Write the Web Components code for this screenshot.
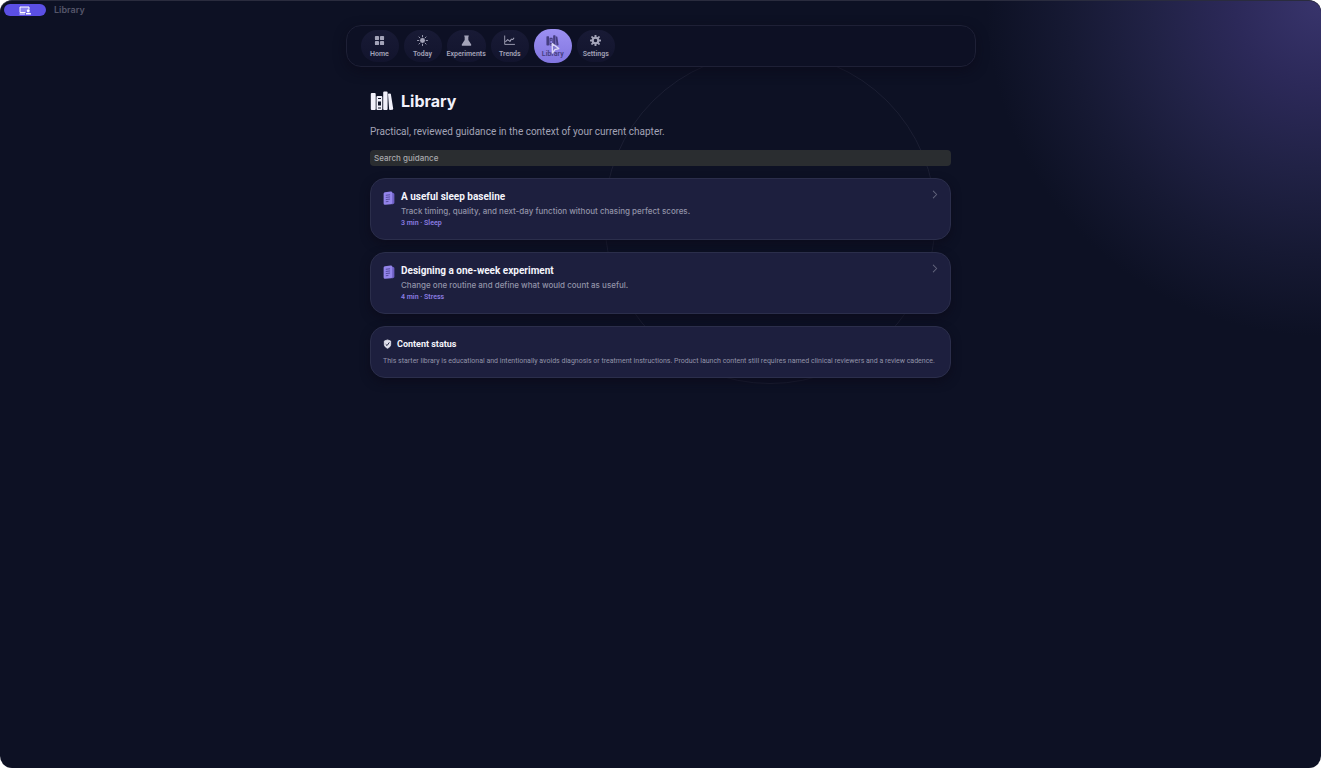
<!DOCTYPE html>
<html lang="en">
<head>
<meta charset="utf-8">
<meta name="viewport" content="width=device-width, initial-scale=1">
<title>Library</title>
<style>
  body {
    margin: 0;
    background: #fff;
    --text: Roboto, "Liberation Sans", sans-serif;
    --display: Inter, "Liberation Sans", sans-serif;
    font-family: var(--text);
  }
</style>
</head>
<body>
<library-app></library-app>

<script>
(() => {
  "use strict";

  const icons = {
    home: `
      <svg viewBox="0 0 24 24" aria-hidden="true">
        <g fill="currentColor">
          <rect x="2" y="2" width="9" height="9" rx="2"/>
          <rect x="13" y="2" width="9" height="9" rx="2"/>
          <rect x="2" y="13" width="9" height="9" rx="2"/>
          <rect x="13" y="13" width="9" height="9" rx="2"/>
        </g>
      </svg>`,
    today: `
      <svg viewBox="0 0 24 24" aria-hidden="true">
        <circle cx="12" cy="12" r="5.4" fill="currentColor"/>
        <path d="M12 1v3M12 20v3M1 12h3M20 12h3M4.2 4.2l2.1 2.1M17.7 17.7l2.1 2.1M4.2 19.8l2.1-2.1M17.7 6.3l2.1-2.1" stroke="currentColor" stroke-width="2" stroke-linecap="round"/>
      </svg>`,
    experiments: `
      <svg viewBox="0 0 24 24" aria-hidden="true">
        <path d="M7 1h10v2.500h-1V11l6 9c1 2 0 3.500-2 3.500H4c-2 0-3-1.500-2-3.500l6-9V3.500H7z" fill="currentColor"/>
      </svg>`,
    trends: `
      <svg viewBox="0 0 24 24" aria-hidden="true">
        <path d="M1.500 2v18.500H23" fill="none" stroke="currentColor" stroke-width="2" stroke-linecap="round"/>
        <path d="M3 15l5-5 5 4 3-5 3 1 3-4" fill="none" stroke="currentColor" stroke-width="2.200" stroke-linejoin="round"/>
      </svg>`,
    library: `
      <svg viewBox="0 0 24 20" aria-hidden="true">
        <path fill="currentColor" fill-rule="evenodd" d="M1.800 2H4.700Q5.700 2 5.700 3V18Q5.700 19 4.700 19H1.800Q.8 19 .8 18V3Q.8 2 1.800 2z
          M7.500 5H11.300Q12.300 5 12.300 6V18Q12.300 19 11.300 19H7.500Q6.500 19 6.500 18V6Q6.500 5 7.500 5zM8 7v1h3V7zM8 10.500v4h3v-4zM8 16.500v1h3v-1z
          M14.200.5H16.600Q17.600.5 17.600 1.500V18Q17.600 19 16.600 19H14.200Q13.200 19 13.200 18V1.500Q13.200.5 14.200.5z"/>
        <path fill="currentColor" d="M18 2.700l2-.2q.8 0 .9.700l2.300 14.600q0 .9-.8 1l-2.400.2q-.8 0-.9-.8z"/>
      </svg>`,
    settings: `
      <svg viewBox="0 0 24 24" aria-hidden="true">
        <path d="M12 1.500v4M12 18.500v4M1.500 12h4M18.500 12h4M4.600 4.600l2.800 2.800M16.600 16.600l2.800 2.800M19.400 4.600l-2.800 2.800M7.400 16.600l-2.800 2.800" stroke="currentColor" stroke-width="4.400" stroke-linecap="round"/>
        <circle cx="12" cy="12" r="6.200" fill="none" stroke="currentColor" stroke-width="4.400"/>
      </svg>`,
    article: `
      <svg viewBox="0 0 22 26" aria-hidden="true">
        <path d="M16 3l3 .6q2 .4 2 2.400V22q0 2-2 2.300l-3 .7z" fill="#6e5fc4"/>
        <path d="M3.500 2.500L14 1q3-.3 3 2.500v19q0 2-2 2.200L4 25.500q-3 .2-3-2.500V5q0-2 2.500-2.500z" fill="#9384ea"/>
        <path d="M5 8l8-1M5 12l8-1M5 16l8-1M5 20l5-.6" stroke="#4c4290" stroke-width="1.600"/>
      </svg>`,
    shield: `
      <svg viewBox="0 0 20 22" aria-hidden="true">
        <path d="M10 2l7 2.500v7.500c0 4-3 6.500-7 8.500-4-2-7-4.500-7-8.500V4.500z" fill="#e0e0ec" stroke="#e0e0ec" stroke-width="2" stroke-linejoin="round"/>
        <path d="M6 11.500l3 3L14 7.500" fill="none" stroke="#1d1f3e" stroke-width="2.200"/>
      </svg>`,
    chevron: `
      <svg viewBox="0 0 10 16" aria-hidden="true">
        <path d="M2 2l6 6-6 6" fill="none" stroke="currentColor" stroke-width="1.800" stroke-linecap="round" stroke-linejoin="round"/>
      </svg>`,
    presenter: `
      <svg viewBox="0 0 24 18" aria-hidden="true">
        <path d="M13 13H2V2h18v5" fill="#8d84f0" stroke="#fff" stroke-width="2"/>
        <circle cx="18.500" cy="9.500" r="3" fill="#fff"/>
        <path d="M13.500 17v-1q0-2.500 3-2.500h4.500q3 0 3 2.500v1z" fill="#fff"/>
        <path d="M1 16h11" stroke="#fff" stroke-width="2"/>
      </svg>`,
    pointer: `
      <svg viewBox="0 0 20 24" aria-hidden="true">
        <path d="M4 3l12 9-7 2-4.500 6z" fill="#8279cd" stroke="#dcd8f6" stroke-width="2.400" stroke-linejoin="round"/>
      </svg>`,
  };

  class TitleBar extends HTMLElement {
    connectedCallback() {
      this.attachShadow({ mode: "open" }).innerHTML = `
        <style>
          :host {
            display: flex;
            align-items: center;
            gap: 8px;
            height: 18px;
            padding: 0 4px;
            color: #55566a;
            font-family: var(--display);
            font-size: 9px;
            line-height: 12px;
            font-weight: 600;
          }

          button {
            display: grid;
            place-items: center;
            width: 42px;
            height: 12px;
            padding: 0;
            border: 0;
            border-radius: 6px;
            background: #5b4fe4;
          }

          svg { display: block; width: 12px; height: 9px; }
        </style>
        <button type="button" aria-label="Presenter">${icons.presenter}</button>
        <slot></slot>`;
    }
  }

  class NavItem extends HTMLElement {
    connectedCallback() {
      const active = this.hasAttribute("active");
      this.attachShadow({ mode: "open" }).innerHTML = `
        <style>
          :host { display: block; position: relative; }

          a {
            box-sizing: border-box;
            display: flex;
            flex-direction: column;
            align-items: center;
            justify-content: center;
            gap: 4px;
            min-width: 38px;
            height: 32px;
            border-radius: 17px;
            background: linear-gradient(#181a35, #12142d);
            color: #a3a3b8;
            font-size: 7px;
            line-height: 8px;
            font-weight: 600;
            text-decoration: none;
          }

          a.active {
            height: 34px;
            background: linear-gradient(#9c90f2, #8276e0);
            color: #453d80;
          }

          .icon svg { display: block; width: 11px; height: 11px; }
          .active .icon svg { width: 13px; }

          .pointer {
            position: absolute;
            top: 13px;
            left: 16px;
            width: 11px;
            height: 13px;
          }
          .pointer svg { display: block; }
        </style>
        <a href="#${this.getAttribute("icon")}" ${active ? 'class="active" aria-current="page"' : ""}>
          <span class="icon">${icons[this.getAttribute("icon")]}</span>
          <slot></slot>
        </a>
        ${active ? `<span class="pointer">${icons.pointer}</span>` : ""}`;
    }
  }

  class NavBar extends HTMLElement {
    connectedCallback() {
      this.attachShadow({ mode: "open" }).innerHTML = `
        <style>
          :host { display: block; }

          nav {
            display: flex;
            align-items: center;
            gap: 5px;
            padding: 3px 14px;
            border: 1px solid #1e2036;
            border-radius: 15px;
            background: #0d1024;
            box-shadow: 0 4px 12px rgba(12, 10, 26, .7);
          }
        </style>
        <nav aria-label="Main"><slot></slot></nav>`;
    }
  }

  class SearchField extends HTMLElement {
    connectedCallback() {
      const label = this.getAttribute("label");
      this.attachShadow({ mode: "open" }).innerHTML = `
        <style>
          :host { display: block; }

          input {
            box-sizing: border-box;
            display: block;
            width: 100%;
            height: 16px;
            padding: 0 4px;
            border: 0;
            border-radius: 4px;
            background: #2a2d30;
            color: #e8e8f2;
            font: 500 8px/12px var(--display);
          }

          input::placeholder { color: #a8a9ad; opacity: 1; }
        </style>
        <input type="search" aria-label="${label}" placeholder="${label}">`;
    }
  }

  // shared surface of the article cards and the status card
  const cardStyles = `
    :host { display: block; }

    .card {
      box-sizing: border-box;
      display: flex;
      padding: 12px;
      border: 1px solid #2b2e4b;
      border-radius: 15px;
      background: #1d1f3e;
      box-shadow: 0 4px 10px rgba(12, 10, 26, .7);
      color: #9293a8;
      text-decoration: none;
    }

    h2 {
      margin: 0;
      color: #f4f4fb;
      font-weight: 700;
    }

    p { margin: 0; }
    svg { display: block; }
  `;

  class ArticleCard extends HTMLElement {
    connectedCallback() {
      this.attachShadow({ mode: "open" }).innerHTML = `
        <style>
          ${cardStyles}

          .card { gap: 6px; padding: 11px 12px; }
          .body { flex: 1; }
          h2 { font-size: 10px; line-height: 14px; }
          p { font: 500 8px/14px var(--display); }

          .meta {
            color: #8b7de2;
            font: 600 7px/10px var(--text);
          }

          .icon { padding-top: 1px; }
          .icon svg { width: 12px; height: 14px; }
          .chevron { color: #62647c; }
          .chevron svg { width: 6px; height: 9px; }
        </style>
        <a class="card" href="#article">
          <span class="icon">${icons.article}</span>
          <div class="body">
            <h2><slot name="title"></slot></h2>
            <p><slot></slot></p>
            <p class="meta"><slot name="meta"></slot></p>
          </div>
          <span class="chevron">${icons.chevron}</span>
        </a>`;
    }
  }

  class StatusCard extends HTMLElement {
    connectedCallback() {
      this.attachShadow({ mode: "open" }).innerHTML = `
        <style>
          ${cardStyles}

          .card {
            flex-direction: column;
            gap: 8px;
            font-size: 7px;
            line-height: 8px;
          }

          header { display: flex; align-items: center; gap: 5px; }
          header svg { width: 9px; height: 10px; }
          h2 { font-size: 9px; line-height: 10px; }
        </style>
        <section class="card">
          <header>${icons.shield}<h2><slot name="title"></slot></h2></header>
          <p><slot></slot></p>
        </section>`;
    }
  }

  class LibraryApp extends HTMLElement {
    connectedCallback() {
      this.attachShadow({ mode: "open" }).innerHTML = `
        <style>
          :host {
            box-sizing: border-box;
            display: block;
            position: relative;
            overflow: hidden;
            min-height: 100vh;
            border-top: 1px solid #2a2c3e;
            border-radius: 12px;
            background:
              radial-gradient(circle 335px at 100% 0, #38346c, #2c2959 26%, #212246 50%, #161933 76%, rgba(13, 17, 36, 0)),
              #0d1124;
          }

          .ring {
            position: absolute;
            top: 51px;
            left: calc(50% - 57px);
            box-sizing: border-box;
            width: 332px;
            height: 332px;
            border: 1px solid #1c1f33;
            border-radius: 50%;
          }

          title-bar, nav-bar, main { position: relative; }

          nav-bar {
            max-width: 630px;
            margin: 6px auto 0;
          }

          main {
            display: flex;
            flex-direction: column;
            gap: 12px;
            max-width: 581px;
            margin: 0 auto;
            padding: 22px 24px 24px;
          }

          .heading { display: flex; align-items: center; gap: 7px; color: #f2f1fb; }
          .heading svg { display: block; width: 24px; height: 20px; }
          h1 {
            margin: 0;
            font: 700 16px/24px var(--display);
          }

          .lead {
            margin: 0;
            color: #a3a4b6;
            font-size: 10px;
            line-height: 13px;
          }
        </style>
        <div class="ring"></div>
        <title-bar>Library</title-bar>
        <nav-bar>
          <nav-item icon="home">Home</nav-item>
          <nav-item icon="today">Today</nav-item>
          <nav-item icon="experiments">Experiments</nav-item>
          <nav-item icon="trends">Trends</nav-item>
          <nav-item icon="library" active>Library</nav-item>
          <nav-item icon="settings">Settings</nav-item>
        </nav-bar>
        <main>
          <div class="heading">${icons.library}<h1>Library</h1></div>
          <p class="lead">Practical, reviewed guidance in the context of your current chapter.</p>
          <search-field label="Search guidance"></search-field>
          <article-card>
            <span slot="title">A useful sleep baseline</span>
            Track timing, quality, and next-day function without chasing perfect scores.
            <span slot="meta">3 min · Sleep</span>
          </article-card>
          <article-card>
            <span slot="title">Designing a one-week experiment</span>
            Change one routine and define what would count as useful.
            <span slot="meta">4 min · Stress</span>
          </article-card>
          <status-card>
            <span slot="title">Content status</span>
            This starter library is educational and intentionally avoids diagnosis or treatment instructions. Product launch content still requires named clinical reviewers and a review cadence.
          </status-card>
        </main>`;
    }
  }

  customElements.define("title-bar", TitleBar);
  customElements.define("nav-item", NavItem);
  customElements.define("nav-bar", NavBar);
  customElements.define("search-field", SearchField);
  customElements.define("article-card", ArticleCard);
  customElements.define("status-card", StatusCard);
  customElements.define("library-app", LibraryApp);
})();
</script>
</body>
</html>
